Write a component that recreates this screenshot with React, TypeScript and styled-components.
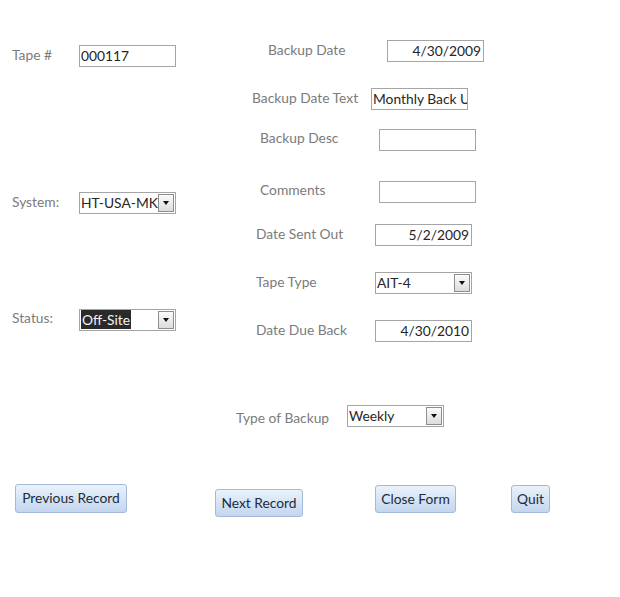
import React, { FC } from 'react'
import styled, { createGlobalStyle } from 'styled-components'

const GlobalStyle = createGlobalStyle`
	html, body {
		margin: 0;
		padding: 0;
		background: #ffffff;
	}
	body {
		font-family: Lato, 'Open Sans', sans-serif;
		font-size: 13.8px;
	}
`

const FormUI = styled.div`
	width: 620px;
	height: 597px;
	background: #ffffff;
	color: #222;
`

const Sections = styled.div`
	display: flex;
	height: 342px;
`

const Column = styled.div<{ $width?: number }>`
	display: flex;
	flex-direction: column;
	width: ${p => (p.$width ? `${p.$width}px` : 'auto')};
`

const Row = styled.div<{ $top: number; $indent: number }>`
	display: flex;
	align-items: center;
	margin-top: ${p => p.$top}px;
	padding-left: ${p => p.$indent}px;
	height: 22px;
`

const Label = styled.span<{ $width: number; $shift?: number }>`
	width: ${p => p.$width}px;
	flex-shrink: 0;
	color: #7b7b7b;
	white-space: nowrap;
	position: relative;
	top: ${p => p.$shift ?? -2}px;
`

const TextBox = styled.div<{ $align?: 'left' | 'right' }>`
	box-sizing: border-box;
	width: 97px;
	height: 22px;
	border: 1px solid #a5a5a5;
	background: #fff;
	display: flex;
	align-items: center;
	justify-content: ${p => (p.$align === 'right' ? 'flex-end' : 'flex-start')};
	padding: 0 2px 1px 1px;
	overflow: hidden;
	white-space: nowrap;
	color: #262626;
`

const Combo = styled(TextBox)`
	position: relative;
	padding-right: 18px;
`

const Selected = styled.span`
	background: #2a2a2a;
	color: #f4f4f4;
	padding: 0 1px;
	line-height: 19px;
`

const ArrowButton = styled.span`
	position: absolute;
	right: 1px;
	top: 1px;
	bottom: 1px;
	width: 16px;
	box-sizing: border-box;
	border: 1px solid #8e8e8e;
	background: linear-gradient(#fbfbfb, #dcdcdc);
	display: flex;
	align-items: center;
	justify-content: center;

	&::after {
		content: '';
		border-left: 3.5px solid transparent;
		border-right: 3.5px solid transparent;
		border-top: 4px solid #111;
	}
`

const ButtonRow = styled.div`
	display: flex;
	align-items: flex-start;
	margin-top: 57px;
`

const Button = styled.button<{ $width: number; $left: number; $top: number; $height?: number }>`
	box-sizing: border-box;
	width: ${p => p.$width}px;
	height: ${p => p.$height ?? 28}px;
	margin-left: ${p => p.$left}px;
	margin-top: ${p => p.$top}px;
	padding: 0 0 2px;
	border: 1px solid #a3b9d7;
	border-radius: 3px;
	background: linear-gradient(#ebf2fb, #d6e4f5 50%, #c3d6ef);
	font-family: inherit;
	font-size: 13.8px;
	color: #202c3a;
	white-space: nowrap;
`

interface FieldProps {
	label: string
	top: number
	indent: number
	labelWidth: number
	value?: string
	align?: 'left' | 'right'
	combo?: boolean
	selected?: boolean
	shift?: number
}

const Field: FC<FieldProps> = ({ label, top, indent, labelWidth, value, align, combo, selected, shift }) => (
	<Row $top={top} $indent={indent}>
		<Label $width={labelWidth} $shift={shift}>{label}</Label>
		{combo ? (
			<Combo>
				{selected ? <Selected>{value}</Selected> : value}
				<ArrowButton />
			</Combo>
		) : (
			<TextBox $align={align}>{value}</TextBox>
		)}
	</Row>
)

const App: FC = () => (
	<FormUI>
		<GlobalStyle />
		<Sections>
			<Column $width={236}>
				<Field label='Tape #' top={45} indent={12} labelWidth={67} value='000117' />
				<Field label='System:' top={125} indent={12} labelWidth={67} value='HT-USA-MKE' combo />
				<Field label='Status:' top={95} indent={12} labelWidth={67} value='Off-Site' combo selected shift={-3} />
			</Column>
			<Column>
				<Field label='Backup Date' top={40} indent={32} labelWidth={119} value='4/30/2009' align='right' />
				<Field label='Backup Date Text' top={26} indent={16} labelWidth={119} value='Monthly Back Up' />
				<Field label='Backup Desc' top={19} indent={24} labelWidth={119} value='' shift={-3} />
				<Field label='Comments' top={30} indent={24} labelWidth={119} value='' shift={-3} />
				<Field label='Date Sent Out' top={21} indent={20} labelWidth={119} value='5/2/2009' align='right' />
				<Field label='Tape Type' top={26} indent={20} labelWidth={119} value='AIT-4' combo />
				<Field label='Date Due Back' top={26} indent={20} labelWidth={119} value='4/30/2010' align='right' />
			</Column>
		</Sections>
		<Field label='Type of Backup' top={63} indent={236} labelWidth={111} value='Weekly' combo shift={1} />
		<ButtonRow>
			<Button $width={112} $height={29} $left={15} $top={0}>Previous Record</Button>
			<Button $width={88} $left={88} $top={5}>Next Record</Button>
			<Button $width={81} $left={72} $top={1}>Close Form</Button>
			<Button $width={39} $left={55} $top={1}>Quit</Button>
		</ButtonRow>
	</FormUI>
)

export default App
